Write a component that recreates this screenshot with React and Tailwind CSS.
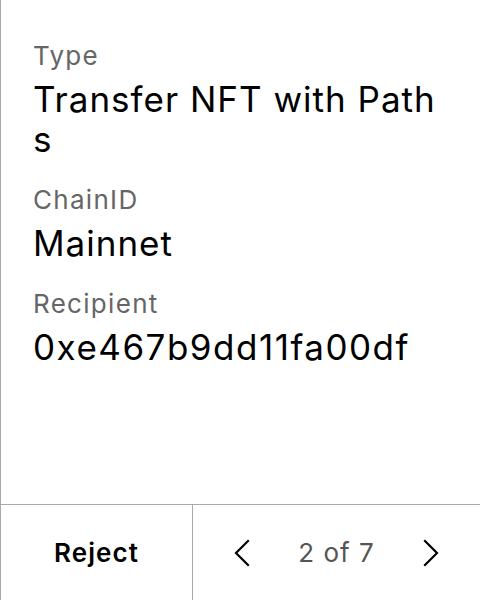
import React from 'react';

const fields = [
  { label: 'Type', value: 'Transfer NFT with Paths', tracking: 'tracking-[1px]' },
  { label: 'ChainID', value: 'Mainnet', tracking: 'tracking-[1px]' },
  { label: 'Recipient', value: '0xe467b9dd11fa00df', tracking: 'tracking-[1.5px]' },
];

function Chevron({ dir }) {
  const points = dir === 'left' ? '14,2 2,14 14,26' : '2,2 14,14 2,26';
  return (
    <svg width="16" height="28" viewBox="0 0 16 28" fill="none">
      <polyline points={points} stroke="#000" strokeWidth="2.2" strokeLinecap="square" />
    </svg>
  );
}

export default function App() {
  return (
    <div
      className="w-[480px] h-[600px] bg-white flex flex-col border-l border-[#aaaaaa] text-black"
      style={{ fontFamily: 'Inter, "Noto Sans", sans-serif' }}
    >
      <div className="flex-1 pl-[32px] pr-[32px] pt-[41px] flex flex-col gap-[26px]">
        {fields.map((f) => (
          <div key={f.label} className="flex flex-col gap-[8px]">
            <div className="text-[26px] leading-[30px] tracking-[1.3px] text-[#666666]">{f.label}</div>
            <div className={`text-[35px] leading-[40px] break-all ${f.tracking}`}>{f.value}</div>
          </div>
        ))}
      </div>
      <div className="h-[96px] border-t border-[#aaaaaa] flex">
        <button className="w-[192px] border-r border-[#aaaaaa] flex items-center justify-center text-[26px] tracking-[1.1px] font-semibold">
          Reject
        </button>
        <div className="flex-1 flex items-center justify-center gap-[48px]">
          <Chevron dir="left" />
          <span className="text-[26px] tracking-[1px] text-[#555555] whitespace-nowrap">2 of 7</span>
          <Chevron dir="right" />
        </div>
      </div>
    </div>
  );
}
